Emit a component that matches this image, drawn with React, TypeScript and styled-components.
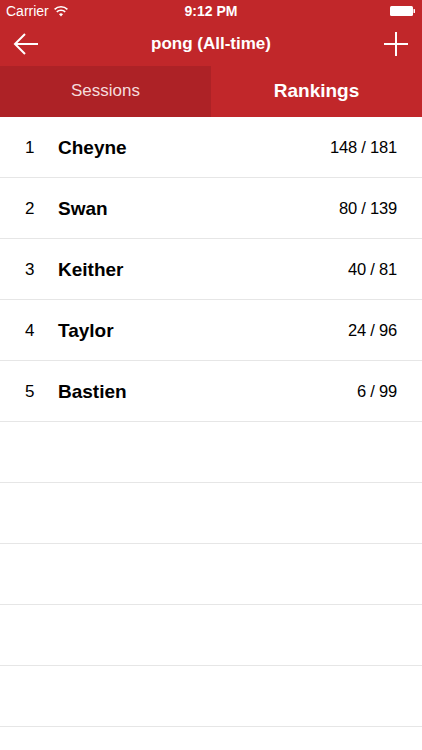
import styled, { createGlobalStyle } from "styled-components";

const rankings = [
  { name: "Cheyne", wins: 148, games: 181 },
  { name: "Swan", wins: 80, games: 139 },
  { name: "Keither", wins: 40, games: 81 },
  { name: "Taylor", wins: 24, games: 96 },
  { name: "Bastien", wins: 6, games: 99 },
];

const EMPTY_ROWS = 6;

const GlobalStyle = createGlobalStyle`
  html, body {
    margin: 0;
    padding: 0;
    background: #ffffff;
  }
  body {
    font-family: "Liberation Sans", Arial, sans-serif;
    -webkit-font-smoothing: antialiased;
  }
`;

const Screen = styled.div`
  width: 422px;
  height: 750px;
  overflow: hidden;
  display: flex;
  flex-direction: column;
  background: #ffffff;
`;

const Header = styled.div`
  background: #c1272a;
  color: #ffffff;
  display: flex;
  flex-direction: column;
`;

const StatusBar = styled.div`
  height: 22px;
  display: grid;
  grid-template-columns: 1fr auto 1fr;
  align-items: center;
  padding: 0 6px;
  font-size: 14px;
`;

const Carrier = styled.div`
  display: flex;
  align-items: center;
  gap: 5px;
`;

const Clock = styled.div`
  font-weight: bold;
`;

const BatteryWrap = styled.div`
  display: flex;
  justify-content: flex-end;
  padding-right: 1px;
`;

const NavBar = styled.div`
  height: 44px;
  display: flex;
  align-items: center;
  justify-content: space-between;
  padding: 0 12px 0 12px;
`;

const NavButton = styled.button`
  background: none;
  border: none;
  padding: 0;
  width: 28px;
  height: 28px;
  display: flex;
  align-items: center;
  justify-content: center;
  color: #ffffff;
`;

const Title = styled.div`
  font-size: 17px;
  font-weight: bold;
`;

const Tabs = styled.div`
  height: 51px;
  display: grid;
  grid-template-columns: 211px 1fr;
`;

const Tab = styled.div<{ $active?: boolean }>`
  display: flex;
  align-items: center;
  justify-content: center;
  padding-bottom: 1px;
  background: ${(p) => (p.$active ? "#c1272a" : "#ad2226")};
  font-size: ${(p) => (p.$active ? "19px" : "17px")};
  font-weight: ${(p) => (p.$active ? "bold" : "normal")};
  color: ${(p) => (p.$active ? "#ffffff" : "#f5dcdc")};
`;

const List = styled.div`
  display: flex;
  flex-direction: column;
`;

const Row = styled.div`
  box-sizing: border-box;
  height: 61px;
  border-bottom: 1px solid #e6e6e6;
  display: flex;
  align-items: center;
  padding: 1px 25px 0 25px;
  color: #000000;
`;

const Rank = styled.div`
  width: 33px;
  font-size: 17px;
`;

const Name = styled.div`
  flex: 1;
  font-size: 19px;
  font-weight: bold;
`;

const Score = styled.div`
  font-size: 16.5px;
  letter-spacing: -0.2px;
`;

const Battery = () => (
  <svg width="25" height="10" viewBox="0 0 25 10">
    <rect x="0" y="0" width="23" height="10" rx="1.5" fill="#ffffff" />
    <rect x="23.5" y="3" width="1.5" height="4" rx="0.5" fill="#ffffff" />
  </svg>
);

const Wifi = () => (
  <svg width="14" height="11" viewBox="0 0 14 11">
    <path d="M7 10.5 L9 8.2 A3 3 0 0 0 5 8.2 Z" fill="#ffffff" />
    <path d="M2.8 5.9 A6 6 0 0 1 11.2 5.9" stroke="#ffffff" strokeWidth="1.6" fill="none" />
    <path d="M0.6 3.4 A9.2 9.2 0 0 1 13.4 3.4" stroke="#ffffff" strokeWidth="1.6" fill="none" />
  </svg>
);

const BackArrow = () => (
  <svg width="26" height="22" viewBox="0 0 26 22">
    <path d="M25 11 H2 M12 1 L2 11 L12 21" stroke="#ffffff" strokeWidth="2" fill="none" strokeLinejoin="miter" />
  </svg>
);

const Plus = () => (
  <svg width="26" height="26" viewBox="0 0 26 26">
    <path d="M13 1 V25 M1 13 H25" stroke="#ffffff" strokeWidth="2" fill="none" />
  </svg>
);

const App = () => {
  return (
    <Screen>
      <GlobalStyle />
      <Header>
        <StatusBar>
          <Carrier>
            Carrier <Wifi />
          </Carrier>
          <Clock>9:12 PM</Clock>
          <BatteryWrap>
            <Battery />
          </BatteryWrap>
        </StatusBar>
        <NavBar>
          <NavButton>
            <BackArrow />
          </NavButton>
          <Title>pong (All-time)</Title>
          <NavButton>
            <Plus />
          </NavButton>
        </NavBar>
        <Tabs>
          <Tab>Sessions</Tab>
          <Tab $active>Rankings</Tab>
        </Tabs>
      </Header>
      <List>
        {rankings.map((r, i) => (
          <Row key={r.name}>
            <Rank>{i + 1}</Rank>
            <Name>{r.name}</Name>
            <Score>
              {r.wins} / {r.games}
            </Score>
          </Row>
        ))}
        {Array.from({ length: EMPTY_ROWS }).map((_, i) => (
          <Row key={"empty" + i} />
        ))}
      </List>
    </Screen>
  );
};

export default App;
